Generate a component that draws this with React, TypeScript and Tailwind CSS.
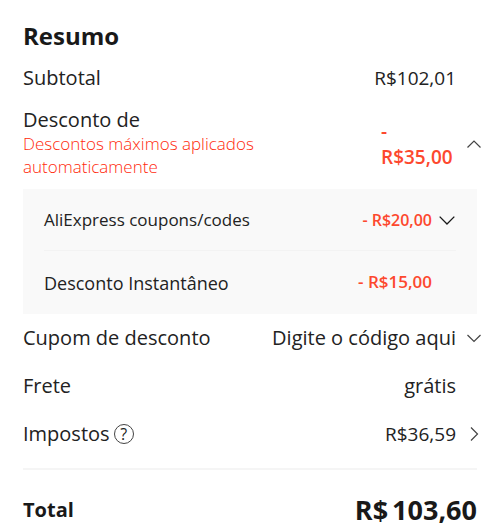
import { useState, type ReactNode } from 'react';

type ChevronProps = { direction: 'up' | 'down' | 'right'; wide?: boolean };

const paths = {
  up: 'M1.5 11.5 8 5l6.5 6.5',
  down: 'M1.5 5 8 11.5 14.5 5',
  right: 'M5 1.5 11.5 8 5 14.5',
};

function Chevron({ direction, wide }: ChevronProps) {
  return (
    <svg
      viewBox="0 0 16 16"
      aria-hidden="true"
      className={wide ? 'size-[18px] text-[#191919]' : 'size-4 text-[#444444]'}
      fill="none"
      stroke="currentColor"
      strokeWidth="1.2"
    >
      <path d={paths[direction]} />
    </svg>
  );
}

function Row({ label, value, action }: { label: ReactNode; value: ReactNode; action?: ReactNode }) {
  return (
    <div className="flex h-12 items-center">
      <div className="flex items-center gap-1">{label}</div>
      <div className="ml-auto">{value}</div>
      <div className="flex w-[26px] justify-end">{action}</div>
    </div>
  );
}

export default function App() {
  const [open, setOpen] = useState(true);

  return (
    <main className="bg-white pt-5 pr-[18px] pl-[23px] font-['Open_Sans',sans-serif] text-xl leading-6 text-[#222222]">
      <h1 className="text-2xl leading-8 font-bold text-[#191919]">Resumo</h1>

      <div className="mt-0.5">
        <Row label="Subtotal" value={<span className="text-[19px]">R$102,01</span>} />
      </div>

      <section className="flex h-[87px] items-center pb-1">
        <div className="w-[260px] pb-0.5">
          <h2 className="leading-6">Desconto de</h2>
          <p className="text-[17px] leading-[23px] font-light text-[#ff2a0c]">
            Descontos máximos aplicados automaticamente
          </p>
        </div>
        <div className="ml-auto w-[75px] text-[19px] leading-[26px] font-semibold text-[#fd482e]">
          - R$35,00
        </div>
        <button
          type="button"
          aria-label="Detalhes do desconto"
          aria-expanded={open}
          onClick={() => setOpen(!open)}
          className="flex w-[26px] justify-end"
        >
          <Chevron direction={open ? 'up' : 'down'} />
        </button>
      </section>

      {open && (
        <div className="mr-[5px] bg-[#f9f9f9] px-[21px]">
          <div className="flex h-[62px] items-center border-b border-[#f3f3f3] text-[17px]">
            <span>AliExpress coupons/codes</span>
            <span className="ml-auto text-base font-semibold text-[#fd482e]">- R$20,00</span>
            <button type="button" aria-label="Ver cupons" className="flex w-6 justify-end">
              <Chevron direction="down" wide />
            </button>
          </div>
          <div className="flex h-[63px] items-center pr-6 text-lg">
            <span>Desconto Instantâneo</span>
            <span className="ml-auto text-[17px] font-semibold text-[#fd482e]">- R$15,00</span>
          </div>
        </div>
      )}

      <Row
        label="Cupom de desconto"
        value="Digite o código aqui"
        action={
          <button type="button" aria-label="Digite o código aqui">
            <Chevron direction="down" />
          </button>
        }
      />
      <Row label="Frete" value="grátis" />
      <Row
        label={
          <>
            Impostos
            <button
              type="button"
              aria-label="Sobre os impostos"
              className="flex size-5 items-center justify-center rounded-full border border-[#444444] text-base"
            >
              ?
            </button>
          </>
        }
        value={<span className="text-[19px]">R$36,59</span>}
        action={
          <button type="button" aria-label="Detalhes dos impostos">
            <Chevron direction="right" />
          </button>
        }
      />

      <div className="mt-[10px] mr-[5px] flex items-center justify-between border-t-2 border-[#f5f5f5] pt-6 font-bold text-[#191919]">
        <span>Total</span>
        <span className="flex gap-1 text-[27px] leading-8">
          <span>R$</span>
          <span>103,60</span>
        </span>
      </div>
    </main>
  );
}
